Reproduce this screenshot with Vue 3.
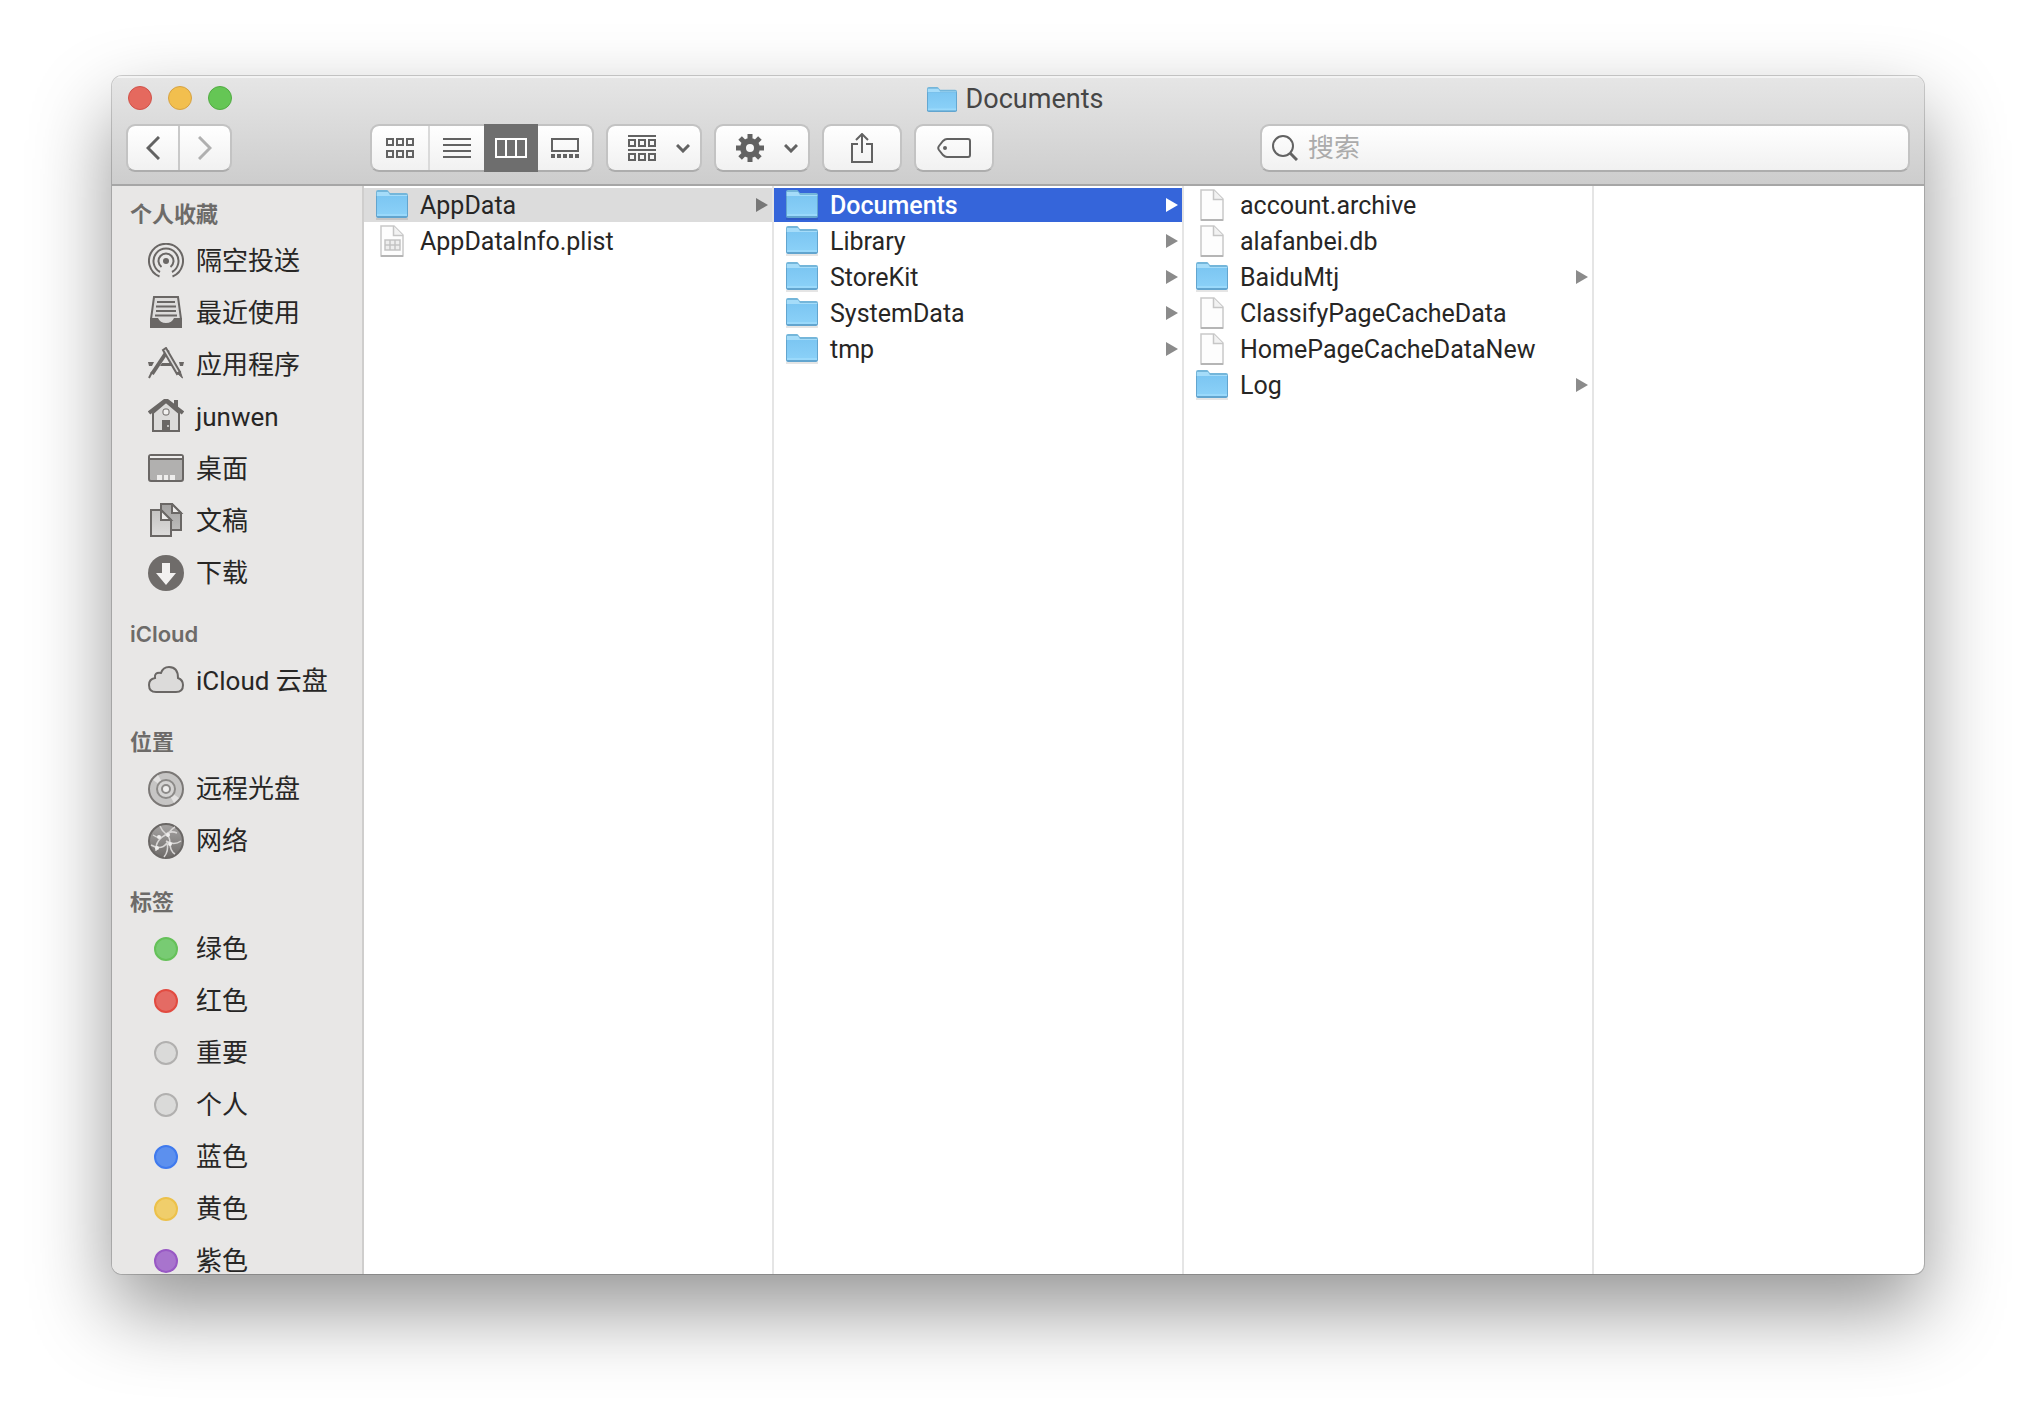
<script setup>
import { ref } from 'vue'

const search = ref('')

const sections = [
  {
    title: '个人收藏',
    items: [
      { icon: 'airdrop', label: '隔空投送' },
      { icon: 'recents', label: '最近使用' },
      { icon: 'apps', label: '应用程序' },
      { icon: 'home', label: 'junwen' },
      { icon: 'desktop', label: '桌面' },
      { icon: 'docs', label: '文稿' },
      { icon: 'download', label: '下载' },
    ],
  },
  { title: 'iCloud', items: [{ icon: 'cloud', label: 'iCloud 云盘' }] },
  {
    title: '位置',
    items: [
      { icon: 'disc', label: '远程光盘' },
      { icon: 'network', label: '网络' },
    ],
  },
  {
    title: '标签',
    items: [
      { tag: 'green', label: '绿色' },
      { tag: 'red', label: '红色' },
      { tag: 'none', label: '重要' },
      { tag: 'none', label: '个人' },
      { tag: 'blue', label: '蓝色' },
      { tag: 'yellow', label: '黄色' },
      { tag: 'purple', label: '紫色' },
    ],
  },
]

const columns = [
  [
    { name: 'AppData', kind: 'folder', state: 'open' },
    { name: 'AppDataInfo.plist', kind: 'plist' },
  ],
  [
    { name: 'Documents', kind: 'folder', state: 'selected' },
    { name: 'Library', kind: 'folder' },
    { name: 'StoreKit', kind: 'folder' },
    { name: 'SystemData', kind: 'folder' },
    { name: 'tmp', kind: 'folder' },
  ],
  [
    { name: 'account.archive', kind: 'file' },
    { name: 'alafanbei.db', kind: 'file' },
    { name: 'BaiduMtj', kind: 'folder' },
    { name: 'ClassifyPageCacheData', kind: 'file' },
    { name: 'HomePageCacheDataNew', kind: 'file' },
    { name: 'Log', kind: 'folder' },
  ],
]

const gearTeeth = [0, 45, 90, 135, 180, 225, 270, 315]
</script>

<template>
  <div class="desktop">
    <svg class="defs" aria-hidden="true">
      <defs>
        <linearGradient id="folder-front" x1="0" y1="0" x2="0" y2="1">
          <stop offset="0" stop-color="#7cc6f2" />
          <stop offset="1" stop-color="#8bd1f8" />
        </linearGradient>
        <linearGradient id="page-back" x1="0" y1="0" x2="0" y2="1">
          <stop offset="0" stop-color="#a3a2a1" />
          <stop offset="1" stop-color="#bdbcbb" />
        </linearGradient>
        <linearGradient id="page-front" x1="0" y1="0" x2="0" y2="1">
          <stop offset="0" stop-color="#c4c3c2" />
          <stop offset="1" stop-color="#dddcdb" />
        </linearGradient>
        <linearGradient id="globe" x1="0" y1="0" x2="0" y2="1">
          <stop offset="0" stop-color="#a6a4a3" />
          <stop offset="1" stop-color="#6f6c6a" />
        </linearGradient>
        <symbol id="folder" viewBox="0 0 32 30">
          <path d="M0 28h32v2H0z" fill="#000" opacity=".1" />
          <path d="M0 2Q0 0 2 0h9q1 0 2 2l1 1h16q2 0 2 2v6H0z" fill="#74b6da" />
          <path d="M1 2h11l2 3h17v2H1z" fill="#a5dcf9" />
          <path d="M0 6h32v20q0 2-2 2H2q-2 0-2-2z" fill="#62a5cf" />
          <path d="M1 6h30v20H1z" fill="url(#folder-front)" />
          <path d="M1 24h30v2H1z" fill="#9ad9fb" />
        </symbol>
        <symbol id="file" viewBox="0 0 24 32">
          <path d="M1 1h13l9 9v21H1z" fill="#fdfdfd" stroke="#c9c9c9" stroke-width="1.5" />
          <path d="M1 31h22" stroke="#b5b5b5" stroke-width="2" />
          <path d="M13.500 1v9.500H23" fill="#f2f2f2" stroke="#c6c6c6" stroke-width="1.500" />
        </symbol>
        <symbol id="plist" viewBox="0 0 24 32">
          <use href="#file" width="24" height="32" />
          <path d="M5 15h15v10H5zM5 20h15M10 15v10M15 15v10" fill="#ededed" stroke="#c3c3c3" stroke-width="1.500" />
        </symbol>
      </defs>
    </svg>

    <main class="window">
      <header class="chrome">
        <div class="titlebar">
          <div class="lights">
            <button class="light close" aria-label="关闭"></button>
            <button class="light minimize" aria-label="最小化"></button>
            <button class="light zoom" aria-label="缩放"></button>
          </div>
          <h1 class="title">
            <svg width="30" height="25" viewBox="0 0 32 28" preserveAspectRatio="none"><use href="#folder" width="32" height="30" /></svg>
            Documents
          </h1>
        </div>

        <div class="toolbar">
          <div class="group nav">
            <button class="seg" aria-label="后退">
              <svg width="14" height="24" viewBox="0 0 14 24"><path d="M13 1L2 12l11 11" class="line bold" /></svg>
            </button>
            <button class="seg dim" aria-label="前进">
              <svg width="14" height="24" viewBox="0 0 14 24"><path d="M1 1l11 11L1 23" class="line bold" /></svg>
            </button>
          </div>

          <div class="group views">
            <button class="seg" aria-label="图标">
              <svg width="28" height="20" viewBox="0 0 28 20">
                <path d="M1 1h6v6H1zM11 1h6v6h-6zM21 1h6v6h-6zM1 13h6v6H1zM11 13h6v6h-6zM21 13h6v6h-6z" class="line" />
              </svg>
            </button>
            <button class="seg" aria-label="列表">
              <svg width="28" height="20" viewBox="0 0 28 20"><path d="M0 1h28M0 7h28M0 13h28M0 19h28" class="line" /></svg>
            </button>
            <button class="seg active" aria-label="分栏" aria-pressed="true">
              <svg width="32" height="20" viewBox="0 0 32 20"><path d="M1 1h30v18H1zM11 1v18M21 1v18" class="line" /></svg>
            </button>
            <button class="seg" aria-label="画廊">
              <svg width="28" height="20" viewBox="0 0 28 20">
                <path d="M1 1h26v12H1z" class="line" />
                <path d="M0 18h4M6 18h4M12 18h4M18 18h4M24 18h4" class="line thick" />
              </svg>
            </button>
          </div>

          <button class="tool menu" aria-label="分组">
            <svg width="28" height="26" viewBox="0 0 28 26">
              <path d="M0 1h28M0 15h28" class="line" />
              <path d="M1 5h6v6H1zM11 5h6v6h-6zM21 5h6v6h-6zM1 19h6v6H1zM11 19h6v6h-6zM21 19h6v6h-6z" class="line" />
            </svg>
            <svg width="14" height="9" viewBox="0 0 14 9"><path d="M1 1l6 6 6-6" class="line bold" /></svg>
          </button>

          <button class="tool menu" aria-label="操作">
            <svg width="28" height="28" viewBox="0 0 28 28">
              <circle cx="14" cy="14" r="7" fill="none" stroke="#626262" stroke-width="6" />
              <rect v-for="a in gearTeeth" :key="a" x="11.500" y="0" width="5" height="6" fill="#626262" :transform="`rotate(${a} 14 14)`" />
            </svg>
            <svg width="14" height="9" viewBox="0 0 14 9"><path d="M1 1l6 6 6-6" class="line bold" /></svg>
          </button>

          <button class="tool" aria-label="共享">
            <svg width="22" height="30" viewBox="0 0 22 30">
              <path d="M7 11H1v18h20V11h-6M11 20V2M5 7l6-6 6 6" class="line" />
            </svg>
          </button>

          <button class="tool" aria-label="编辑标签">
            <svg width="34" height="20" viewBox="0 0 34 20">
              <path d="M10 1h21q2 0 2 2v14q0 2-2 2H10Q8 19 6 17L2 12Q.5 10 2 8l4-5Q8 1 10 1z" class="line" />
              <circle cx="8" cy="10" r="2" fill="#626262" />
            </svg>
          </button>

          <label class="search">
            <svg width="26" height="26" viewBox="0 0 26 26">
              <circle cx="11" cy="11" r="10" class="line" />
              <path d="M18 18l7 7" class="line bold" />
            </svg>
            <input v-model="search" type="search" placeholder="搜索" aria-label="搜索" />
          </label>
        </div>
      </header>

      <div class="body">
        <nav class="sidebar">
          <section v-for="s in sections" :key="s.title">
            <h2>{{ s.title }}</h2>
            <a v-for="item in s.items" :key="item.label" href="#" class="place">
              <span v-if="item.tag" class="tag" :class="item.tag"></span>
              <svg v-else-if="item.icon === 'airdrop'" class="icon" viewBox="0 0 36 36">
                <path d="M11.500 33.500a17 17 0 1 1 13 0M12 29a12.500 12.500 0 1 1 12 0M13.500 24a7.500 7.500 0 1 1 9 0" class="side" />
                <circle cx="18" cy="18" r="3" fill="#6a6765" /><path d="M18 18v2" class="side" />
              </svg>
              <svg v-else-if="item.icon === 'recents'" class="icon" viewBox="0 0 36 36">
                <path d="M6 2h24l3 22v8H3v-8z" class="side" fill="#dcdbda" />
                <path d="M9 7h18M8 11.500h20M8 16h20M7 20.500h22" class="side" />
                <path d="M2 23h8q2 5 8 5t8-5h8v8q0 2-2 2H4q-2 0-2-2z" fill="#6a6765" />
              </svg>
              <svg v-else-if="item.icon === 'apps'" class="icon" viewBox="0 0 36 36">
                <path d="M12 19l2-3h9l2 3zM0 15h6l-2 4H1zM31 15h5l-1 4h-3z" fill="#6a6765" />
                <path d="M20 3L4 27" class="side heavy" /><path d="M4 25l-3 6" class="side" />
                <path d="M15 3l3-2 14 24-3 2z" fill="#dcdbda" stroke="#6a6765" stroke-width="2" />
                <path d="M29 26l3-2 2.500 7z" fill="#6a6765" stroke="#6a6765" />
              </svg>
              <svg v-else-if="item.icon === 'home'" class="icon" viewBox="0 0 36 36">
                <path d="M26 1h4v9h-4z" fill="#6a6765" />
                <path d="M5 14L18 3l13 11v18H5z" fill="#dcdbda" stroke="#6a6765" stroke-width="2" />
                <path d="M1 14L18 1l17 13" fill="none" stroke="#6a6765" stroke-width="4" />
                <rect x="15" y="10" width="6" height="6" rx="2" fill="#f2f1f0" stroke="#6a6765" />
                <path d="M14 21h8v11h-8z" fill="#6a6765" /><circle cx="20" cy="27" r="1" fill="#dcdbda" />
              </svg>
              <svg v-else-if="item.icon === 'desktop'" class="icon" viewBox="0 0 36 36">
                <rect x="1" y="4" width="34" height="26" rx="2" fill="#b1b0af" stroke="#6a6765" stroke-width="2" />
                <path d="M2 5h32v2H2z" fill="#eeedec" /><path d="M1 8h34" stroke="#6a6765" stroke-width="2" />
                <path d="M9 24h5v5H9zM16 24h4v5h-4zM22 24h5v5h-5z" fill="#eeedec" />
              </svg>
              <svg v-else-if="item.icon === 'docs'" class="icon" viewBox="0 0 36 36">
                <path d="M13 1h11l9 9v17H13z" fill="url(#page-back)" class="edge" />
                <path d="M24 1v9h9z" fill="#eeedec" class="edge" />
                <path d="M3 7h10l10 10v16H3z" fill="url(#page-front)" class="edge" />
                <path d="M13 7v10h10z" fill="#eeedec" class="edge" />
              </svg>
              <svg v-else-if="item.icon === 'download'" class="icon" viewBox="0 0 36 36">
                <circle cx="18" cy="18" r="18" fill="#6f6c6a" />
                <path d="M14 8h8v10h6L18 30 8 18h6z" fill="#f2f1f0" />
              </svg>
              <svg v-else-if="item.icon === 'cloud'" class="icon" viewBox="0 0 36 36">
                <path d="M8 29Q1 29 1 22q0-6 6-7-1-6 6-5Q15 4 21 4q9 0 9 11 5 2 5 7 0 7-7 7z" fill="#dcdbda" class="edge" />
              </svg>
              <svg v-else-if="item.icon === 'disc'" class="icon" viewBox="0 0 36 36">
                <circle cx="18" cy="18" r="17" fill="#c6c5c4" stroke="#7b7876" stroke-width="2" />
                <path d="M18 18L5 9l5-5zM18 18l13 9-5 5z" fill="#e3e2e1" />
                <circle cx="18" cy="18" r="9" fill="#d5d4d3" stroke="#8c8a88" stroke-width="2" />
                <circle cx="18" cy="18" r="4" fill="#efeeed" stroke="#8c8a88" stroke-width="2" />
              </svg>
              <svg v-else class="icon" viewBox="0 0 36 36">
                <circle cx="18" cy="18" r="17" fill="url(#globe)" stroke="#6a6765" stroke-width="2" />
                <path d="M5 12q7 5 12 0t12-2M12 3q2 5 6 8t4 9q0 8 5 11M20 11Q7 16 8 28M18 18q8 5 15 0M3 22q10 6 16-2 2 8-3 14M27 4q-5 3-7 8" fill="none" stroke="#d8d6d5" stroke-width="1.500" />
                <circle cx="11" cy="14" r="2" fill="#efeeed" /><circle cx="20" cy="12" r="2" fill="#efeeed" />
                <circle cx="22" cy="21" r="2" fill="#efeeed" /><circle cx="9" cy="25" r="2" fill="#efeeed" />
              </svg>
              <span>{{ item.label }}</span>
            </a>
          </section>
        </nav>

        <div class="browser">
          <ul v-for="(col, i) in columns" :key="i" class="column">
            <li v-for="f in col" :key="f.name">
              <button class="row" :class="f.state">
                <svg v-if="f.kind === 'folder'" class="thumb" width="32" height="30"><use href="#folder" width="32" height="30" /></svg>
                <svg v-else class="thumb" width="24" height="32"><use :href="'#' + f.kind" width="24" height="32" /></svg>
                <span class="name">{{ f.name }}</span>
                <svg v-if="f.kind === 'folder'" class="arrow" width="12" height="14" viewBox="0 0 12 14"><path d="M0 0l12 7-12 7z" /></svg>
              </button>
            </li>
          </ul>
          <div class="column rest"></div>
        </div>
      </div>
    </main>
  </div>
</template>

<style>
body {
  margin: 0;
  background: #fff;
}
</style>

<style scoped>
.desktop {
  box-sizing: border-box;
  height: 100vh;
  padding: 76px 112px 148px;
  overflow: hidden;
  display: flex;
  font-family: Roboto, "Noto Sans CJK SC", sans-serif;
  color: #272625;
}
.defs {
  position: absolute;
  width: 0;
  height: 0;
}
.window {
  flex: 1;
  min-width: 0;
  display: flex;
  flex-direction: column;
  border-radius: 10px;
  overflow: hidden;
  background: #fff;
  box-shadow: 0 0 0 1px rgba(0, 0, 0, 0.18), 0 36px 80px rgba(0, 0, 0, 0.42);
}
button {
  margin: 0;
  padding: 0;
  border: 0;
  background: none;
  font: inherit;
  color: inherit;
}
svg {
  display: block;
  flex: none;
}
.chrome {
  background: linear-gradient(#e6e6e6, #cdcdcd);
  border-bottom: 2px solid #a6a6a6;
  box-shadow: inset 0 2px #f3f3f3;
}
.titlebar {
  display: grid;
  grid-template-columns: 1fr auto 1fr;
  align-items: center;
  height: 44px;
  padding: 0 22px 0 16px;
}
.lights {
  display: flex;
  gap: 16px;
}
.light {
  width: 24px;
  height: 24px;
  border-radius: 50%;
  border: 1px solid;
}
.close {
  background: #e5695e;
  border-color: #d0524a;
}
.minimize {
  background: #f2bf4e;
  border-color: #d6a243;
}
.zoom {
  background: #65c655;
  border-color: #52ab43;
}
.title {
  display: flex;
  align-items: center;
  gap: 9px;
  margin: 0;
  padding-top: 2px;
  font-size: 27px;
  line-height: 32px;
  font-weight: 400;
  color: #464646;
}
.toolbar {
  display: flex;
  gap: 12px;
  height: 48px;
  padding: 4px 14px 12px;
}
.group,
.tool,
.search {
  box-sizing: border-box;
  display: flex;
  border: 2px solid #c3c3c3;
  border-bottom-color: #adadad;
  border-radius: 9px;
  background: linear-gradient(#fff, #f1f1f1) padding-box;
}
.nav {
  margin-right: 126px;
}
.seg {
  width: 54px;
  display: flex;
  align-items: center;
  justify-content: center;
}
.nav .seg {
  width: 50px;
}
.nav .seg + .seg {
  width: 52px;
  border-left: 2px solid #c9c9c9;
}
.views .seg:first-child {
  width: 58px;
  border-right: 2px solid #dadada;
}
.views .active {
  margin: -2px 0;
  background: #6e6e6e;
}
.line {
  fill: none;
  stroke: #626262;
  stroke-width: 2;
}
.bold {
  stroke-width: 3;
}
.thick {
  stroke-width: 4;
}
.active .line {
  stroke: #fff;
}
.dim .line {
  stroke: #b0b0b0;
}
.tool {
  width: 80px;
  align-items: center;
  justify-content: center;
}
.menu {
  width: 96px;
  gap: 20px;
  padding-left: 10px;
}
.search {
  flex: 0 1 650px;
  min-width: 160px;
  margin-left: auto;
  align-items: center;
  gap: 10px;
  padding: 0 10px;
}
.search input {
  flex: 1;
  min-width: 0;
  padding: 0;
  border: 0;
  outline: 0;
  background: none;
  font: inherit;
  font-size: 26px;
  line-height: 36px;
  color: #272625;
}
.search input::placeholder {
  color: #ababab;
  opacity: 1;
}
.body {
  flex: 1;
  min-height: 0;
  display: flex;
}
.sidebar {
  box-sizing: border-box;
  flex: none;
  width: 252px;
  padding-top: 11px;
  overflow: hidden;
  background: #e8e7e6;
  border-right: 2px solid #cfcecd;
}
section + section {
  margin-top: 18px;
}
h2 {
  margin: 0;
  padding: 0 0 4px 18px;
  font-family: Inter, "Noto Sans CJK SC", sans-serif;
  font-size: 22px;
  line-height: 34px;
  font-weight: 600;
  color: #6d6b69;
}
.place {
  display: flex;
  align-items: center;
  gap: 12px;
  height: 52px;
  padding-left: 36px;
  font-size: 26px;
  line-height: 36px;
  color: inherit;
  text-decoration: none;
  white-space: nowrap;
}
.icon {
  width: 36px;
  height: 36px;
}
.side {
  stroke: #6a6765;
  stroke-width: 2;
}
.side:not([fill]) {
  fill: none;
}
.heavy {
  stroke-width: 4;
}
.edge {
  stroke: #6a6765;
  stroke-width: 2;
}
.tag {
  box-sizing: border-box;
  width: 24px;
  height: 24px;
  margin: 0 6px;
  border: 2px solid;
  border-radius: 50%;
}
.green {
  background: #78cb73;
  border-color: #65c159;
}
.red {
  background: #e46b64;
  border-color: #e24b40;
}
.none {
  background: #dadad9;
  border-color: #b1b0af;
}
.blue {
  background: #5c90ee;
  border-color: #3f7aee;
}
.yellow {
  background: #f0ce6b;
  border-color: #ecc14a;
}
.purple {
  background: #a874cd;
  border-color: #9858c4;
}
.browser {
  flex: 1;
  min-width: 0;
  display: flex;
  overflow: hidden;
}
.column {
  box-sizing: border-box;
  flex: none;
  width: 410px;
  margin: 0;
  padding: 2px 0 0;
  list-style: none;
  border-right: 2px solid #e5e5e5;
}
.rest {
  flex: 1;
  border: 0;
}
.row {
  width: 100%;
  height: 34px;
  padding: 0 4px 0 12px;
  display: flex;
  align-items: center;
  gap: 12px;
  font-size: 25px;
  line-height: 32px;
  text-align: left;
}
.column li {
  height: 36px;
}
.thumb[width="24"] {
  margin: 0 4px;
}
.name {
  flex: 1;
  padding-top: 2px;
}
.arrow {
  fill: #8b8b8b;
}
.open {
  background: #dcdcdc;
}
.open .arrow {
  fill: #777;
}
.selected {
  background: #3565da;
  color: #fff;
  font-weight: 500;
}
.selected .arrow {
  fill: #fff;
}
</style>
